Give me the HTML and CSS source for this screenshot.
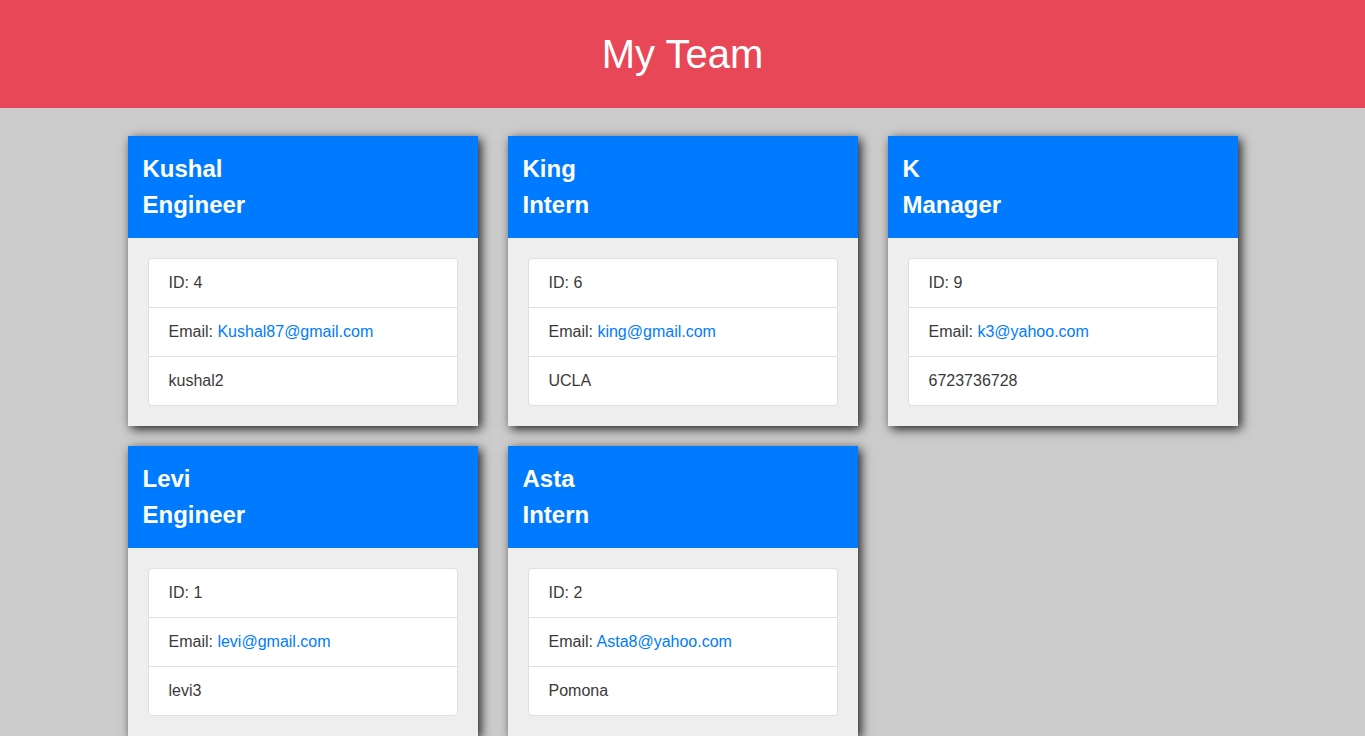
FILE: index.html
```html
<!DOCTYPE html>
<html lang="en">
<head>
<meta charset="utf-8">
<title>My Team</title>
<link rel="stylesheet" href="styles.css">
</head>
<body>
<header class="hero">
  <h1 class="hero-title">My Team</h1>
</header>
<main class="team">
  <div class="card">
    <div class="card-head"><h2 class="name">Kushal</h2><h2 class="role">Engineer</h2></div>
    <div class="card-body">
      <ul class="list">
        <li class="item">ID: 4</li>
        <li class="item">Email: <a class="mail" href="#">Kushal87@gmail.com</a></li>
        <li class="item">kushal2</li>
      </ul>
    </div>
  </div>
  <div class="card">
    <div class="card-head"><h2 class="name">King</h2><h2 class="role">Intern</h2></div>
    <div class="card-body">
      <ul class="list">
        <li class="item">ID: 6</li>
        <li class="item">Email: <a class="mail" href="#">king@gmail.com</a></li>
        <li class="item">UCLA</li>
      </ul>
    </div>
  </div>
  <div class="card">
    <div class="card-head"><h2 class="name">K</h2><h2 class="role">Manager</h2></div>
    <div class="card-body">
      <ul class="list">
        <li class="item">ID: 9</li>
        <li class="item">Email: <a class="mail" href="#">k3@yahoo.com</a></li>
        <li class="item">6723736728</li>
      </ul>
    </div>
  </div>
  <div class="card">
    <div class="card-head"><h2 class="name">Levi</h2><h2 class="role">Engineer</h2></div>
    <div class="card-body">
      <ul class="list">
        <li class="item">ID: 1</li>
        <li class="item">Email: <a class="mail" href="#">levi@gmail.com</a></li>
        <li class="item">levi3</li>
      </ul>
    </div>
  </div>
  <div class="card">
    <div class="card-head"><h2 class="name">Asta</h2><h2 class="role">Intern</h2></div>
    <div class="card-body">
      <ul class="list">
        <li class="item">ID: 2</li>
        <li class="item">Email: <a class="mail" href="#">Asta8@yahoo.com</a></li>
        <li class="item">Pomona</li>
      </ul>
    </div>
  </div>
</main>
</body>
</html>
```
FILE: styles.css
```css
* { box-sizing: border-box; }
html, body { margin: 0; padding: 0; }
body {
  background: #cccccc;
  font-family: "Liberation Sans", Arial, sans-serif;
  font-size: 16px;
  line-height: 1.5;
  color: #3a3a3a;
}
.hero {
  background: #e84757;
  padding: 30px 0;
  text-align: center;
}
.hero-title {
  margin: 0;
  color: #ffffff;
  font-size: 40px;
  font-weight: 400;
  line-height: 48px;
}
.team {
  width: 1110px;
  margin: 28px auto 0;
  display: grid;
  grid-template-columns: repeat(3, 350px);
  column-gap: 30px;
  row-gap: 20px;
}
.card {
  background: #eeeeee;
  box-shadow: 3px 3px 10px rgba(0, 0, 0, 0.85);
}
.card-head {
  background: #007bff;
  color: #ffffff;
  padding: 15px 15px;
}
.name, .role {
  margin: 0;
  font-size: 24px;
  font-weight: 700;
  line-height: 36px;
}
.card-body {
  padding: 20px;
}
.list {
  list-style: none;
  margin: 0;
  padding: 0;
  background: #ffffff;
  border: 1px solid #dfdfdf;
  border-radius: 4px;
}
.item {
  padding: 12px 20px;
  line-height: 24px;
  border-top: 1px solid #dfdfdf;
}
.item:first-child { border-top: 0; }
.mail {
  color: #007bff;
  text-decoration: none;
}
```
